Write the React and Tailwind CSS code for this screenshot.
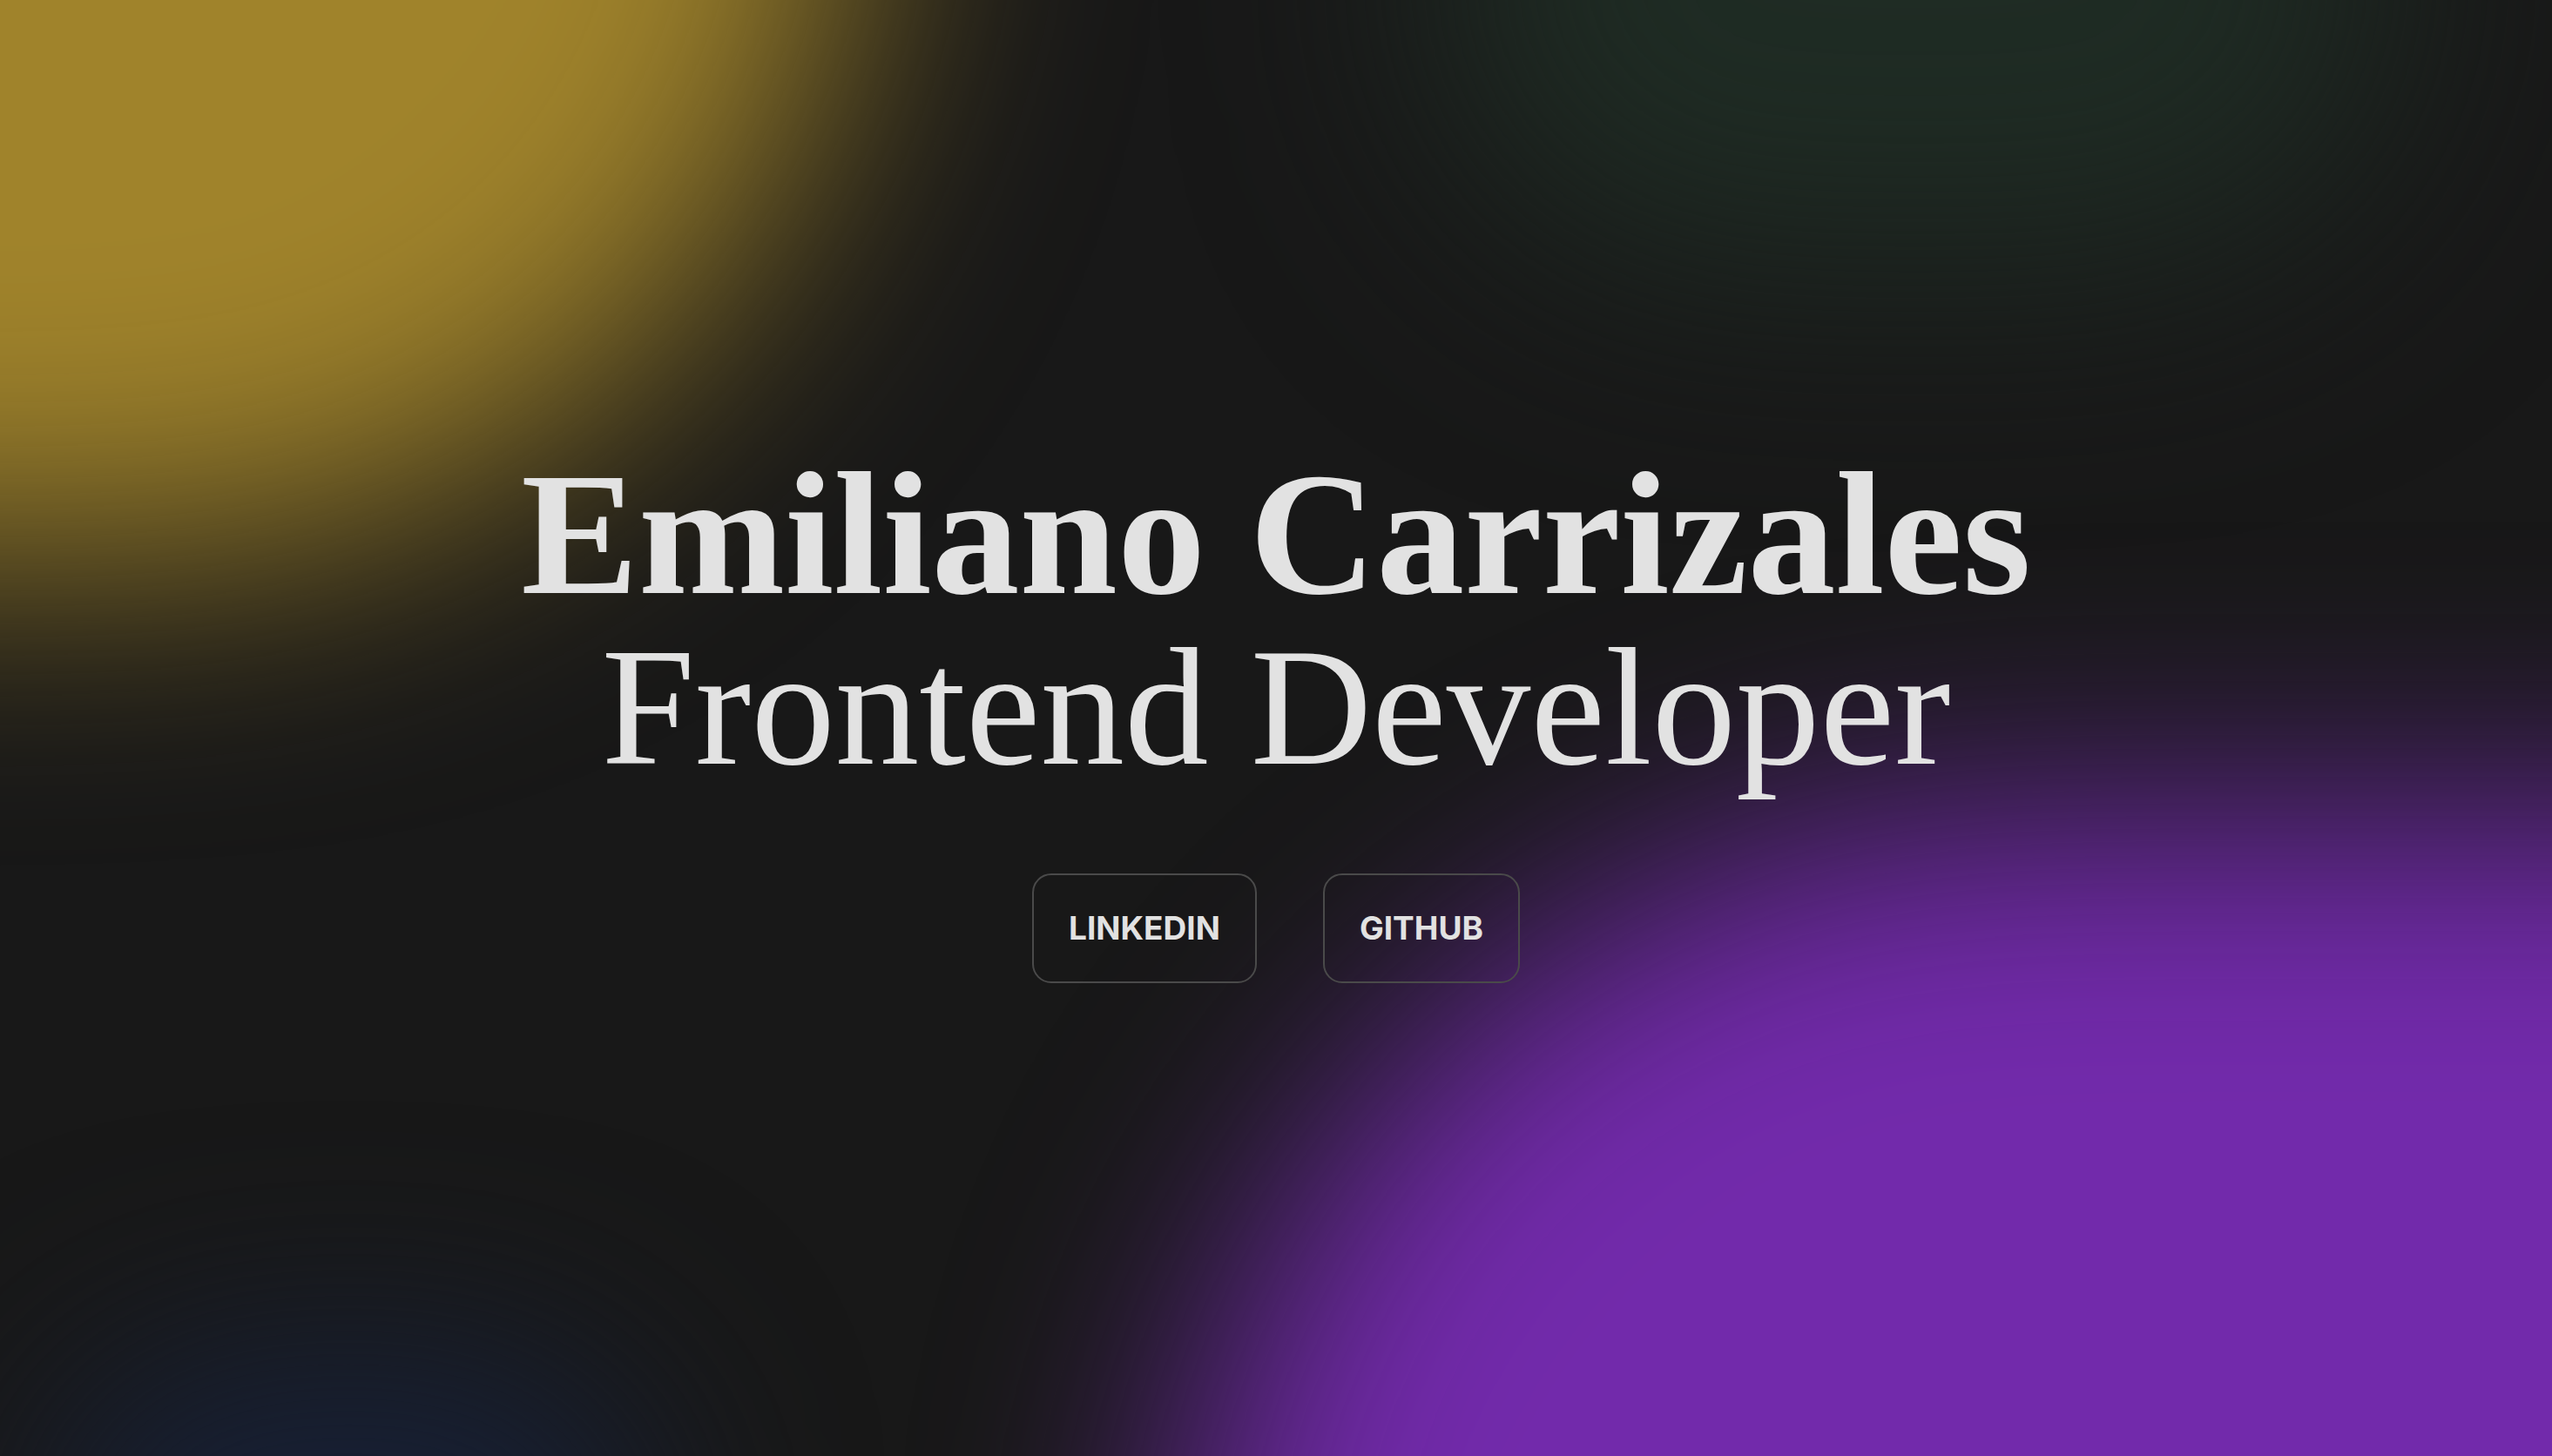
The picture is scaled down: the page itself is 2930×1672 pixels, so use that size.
import React from 'react';

const links = [
  { label: 'LINKEDIN', href: '#' },
  { label: 'GITHUB', href: '#' },
];

export default function App() {
  return (
    <main className="relative min-h-screen w-full overflow-hidden bg-[#181818] text-[#e2e2e2]">
      {/* Background glows */}
      <div className="pointer-events-none absolute inset-0">
        <div className="absolute -left-[1390px] -top-[1035px] h-[1670px] w-[2380px] rounded-full bg-[#a0832b] blur-[150px]" />
        <div className="absolute left-[1650px] -top-[350px] h-[650px] w-[1100px] rounded-full bg-[#1f2c24] blur-[140px]" />
        <div className="absolute left-[1348px] top-[935px] h-[1930px] w-[3104px] rounded-full bg-[#722aab] blur-[140px]" />
        <div className="absolute left-[50px] top-[1550px] h-[450px] w-[700px] rounded-full bg-[#172036] blur-[120px]" />
      </div>

      <section className="relative flex min-h-screen flex-col items-center justify-center pb-[32px]">
        <h1 className="font-['Liberation_Serif',serif] text-[202px] font-bold leading-none">
          Emiliano Carrizales
        </h1>
        <h2 className="mt-[2px] font-['Liberation_Serif',serif] text-[193px] font-normal leading-none">
          Frontend Developer
        </h2>

        <nav className="mt-[94px] flex gap-[76px]">
          {links.map((link) => (
            <a
              key={link.label}
              href={link.href}
              className="rounded-[22px] border-2 border-[#4a4a4a] px-[40px] py-[38px] font-['Inter',sans-serif] text-[37px] font-bold leading-[46px] text-[#e2e2e2]"
            >
              {link.label}
            </a>
          ))}
        </nav>
      </section>
    </main>
  );
}
